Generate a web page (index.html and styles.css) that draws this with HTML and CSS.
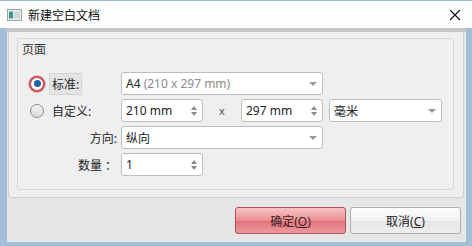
FILE: index.html
```html
<!DOCTYPE html>
<html lang="zh-CN">
<head>
  <meta charset="UTF-8" />
  <title>新建空白文档</title>
  <link rel="stylesheet" href="styles.css">
</head>
<body>
  <div class="window">
    <div class="titlebar">
      <svg class="app-icon" width="15" height="12" viewBox="0 0 15 12">
        <rect x="0.5" y="0.5" width="14" height="11" fill="#e9ecec" stroke="#9aa4a4"/>
        <rect x="2" y="2.5" width="4" height="7" fill="#3b9a8a"/>
        <rect x="7" y="2.5" width="6" height="7" fill="#cfd6d6"/>
      </svg>
      <span class="title">新建空白文档</span>
      <svg class="close" width="12" height="12" viewBox="0 0 12 12">
        <path d="M1 1L11 11M11 1L1 11" stroke="#111" stroke-width="1.1"/>
      </svg>
    </div>

    <div class="frame">
      <div class="panel">
        <div class="group">
          <div class="group-title">页面</div>
          <div class="form">
            <div class="cell choice">
              <span class="radio checked"><span class="dot"></span></span>
              <span class="choice-label focused">标准:</span>
            </div>
            <div class="field combo wide">
              <span class="value">A4 <span class="muted">(210 x 297 mm)</span></span>
              <span class="arrow"></span>
            </div>

            <div class="cell choice">
              <span class="radio"></span>
              <span class="choice-label">自定义:</span>
            </div>
            <div class="field spin">
              <span class="value">210 mm</span>
              <span class="spinner"><span class="up"></span><span class="down"></span></span>
            </div>
            <div class="times">x</div>
            <div class="field spin">
              <span class="value">297 mm</span>
              <span class="spinner"><span class="up"></span><span class="down"></span></span>
            </div>
            <div class="field combo unit">
              <span class="value">毫米</span>
              <span class="arrow"></span>
            </div>

            <div class="cell label">方向:</div>
            <div class="field combo wide">
              <span class="value">纵向</span>
              <span class="arrow"></span>
            </div>

            <div class="cell label">数量 ：</div>
            <div class="field spin">
              <span class="value">1</span>
              <span class="spinner"><span class="up"></span><span class="down"></span></span>
            </div>
          </div>
        </div>
      </div>

      <div class="actions">
        <button class="btn primary">确定(<u>O</u>)</button>
        <button class="btn">取消(<u>C</u>)</button>
      </div>
    </div>
  </div>
</body>
</html>
```

FILE: styles.css
```css
* {
  box-sizing: border-box;
}
body {
  margin: 0;
  background: #a3bed9;
  font-family: 'Noto Sans', 'Noto Sans CJK SC', sans-serif;
  font-size: 12px;
  color: #262626;
}
.window {
  width: 472px;
  height: 246px;
  display: flex;
  flex-direction: column;
}
.titlebar {
  height: 28px;
  background: #fdfdfd;
  border-top: 1px solid #9fbad6;
  display: flex;
  align-items: center;
  padding-left: 7px;
  padding-right: 11px;
}
.app-icon {
  margin-right: 6px;
}
.title {
  font-size: 12px;
  color: #111;
  flex: 1;
}
.frame {
  flex: 1;
  margin: 0 6px 4px 7px;
  background: #e6e6e6;
  border-top: 4px solid #c6c6c6;
  display: flex;
  flex-direction: column;
}
.panel {
  margin: 0 2px 0 1px;
  height: 166px;
  background: #efefef;
  border: 1px solid #d0d0d0;
  border-top: none;
  border-radius: 0 0 4px 4px;
  padding: 6px 9px 7px 8px;
}
.group {
  height: 100%;
  border: 1px solid #d6d6d6;
  border-radius: 3px;
  padding: 3px 0 0 0;
}
.group-title {
  margin-left: 4px;
  line-height: 16px;
  color: #333;
}
.form {
  margin-top: 14px;
  display: grid;
  grid-template-columns: 103px 82px 38px 82px 119px;
  grid-auto-rows: 23px;
  row-gap: 4px;
  align-items: center;
}
.cell {
  grid-column: 1;
  height: 100%;
  display: flex;
  align-items: center;
}
.choice {
  padding-left: 12px;
}
.label {
  justify-content: flex-end;
  padding-right: 4px;
  color: #222;
}
.radio {
  width: 14px;
  height: 14px;
  border-radius: 50%;
  border: 1px solid #8a8a8a;
  background: linear-gradient(#f4f4f4, #dcdcdc);
  display: flex;
  align-items: center;
  justify-content: center;
  margin-right: 5px;
}
.radio.checked {
  width: 16px;
  height: 16px;
  margin-left: -1px;
  margin-right: 4px;
  border: 2px solid #c2525e;
  background: #fff;
  box-shadow: 0 0 0 1px #e6b0b6;
}
.dot {
  width: 7px;
  height: 7px;
  border-radius: 50%;
  background: #1f5ea8;
}
.choice-label {
  padding: 1px 2px;
  border: 1px solid transparent;
}
.choice-label.focused {
  background: #e4e4e4;
  border: 1px solid #d4d4d4;
}
.field {
  height: 23px;
  background: #fff;
  border: 1px solid #bdbdbd;
  border-radius: 3px;
  display: flex;
  align-items: center;
  padding-left: 4px;
  font-size: 12px;
  color: #222;
  white-space: nowrap;
}
.field .value {
  flex: 1;
}
.wide {
  grid-column: 2 / 5;
}
.unit {
  margin-left: 6px;
}
.muted {
  color: #8c8c8c;
}
.arrow {
  width: 0;
  height: 0;
  border-left: 4px solid transparent;
  border-right: 4px solid transparent;
  border-top: 4px solid #9a9a9a;
  margin-right: 5px;
}
.spinner {
  display: flex;
  flex-direction: column;
  gap: 2px;
  margin-right: 5px;
}
.spinner .up, .spinner .down {
  width: 0;
  height: 0;
  border-left: 3.5px solid transparent;
  border-right: 3.5px solid transparent;
}
.spinner .up {
  border-bottom: 4px solid #8a8a8a;
}
.spinner .down {
  border-top: 4px solid #8a8a8a;
}
.times {
  text-align: center;
  color: #555;
  font-size: 11px;
}
.actions {
  display: flex;
  justify-content: flex-end;
  gap: 4px;
  padding: 9px 5px 0 0;
}
.btn {
  width: 111px;
  height: 27px;
  border-radius: 3px;
  border: 1px solid #adadad;
  background: linear-gradient(#fcfcfc, #f1f1f1 50%, #e6e6e6 51%, #eeeeee);
  font-family: 'Noto Sans', 'Noto Sans CJK SC', sans-serif;
  font-size: 12px;
  color: #222;
  padding: 0;
}
.btn.primary {
  border-color: #a9505a;
  background: linear-gradient(#f6c4c4, #ea8e92 50%, #e2727a 51%, #ec9a9e);
  color: #3a2222;
}
```
